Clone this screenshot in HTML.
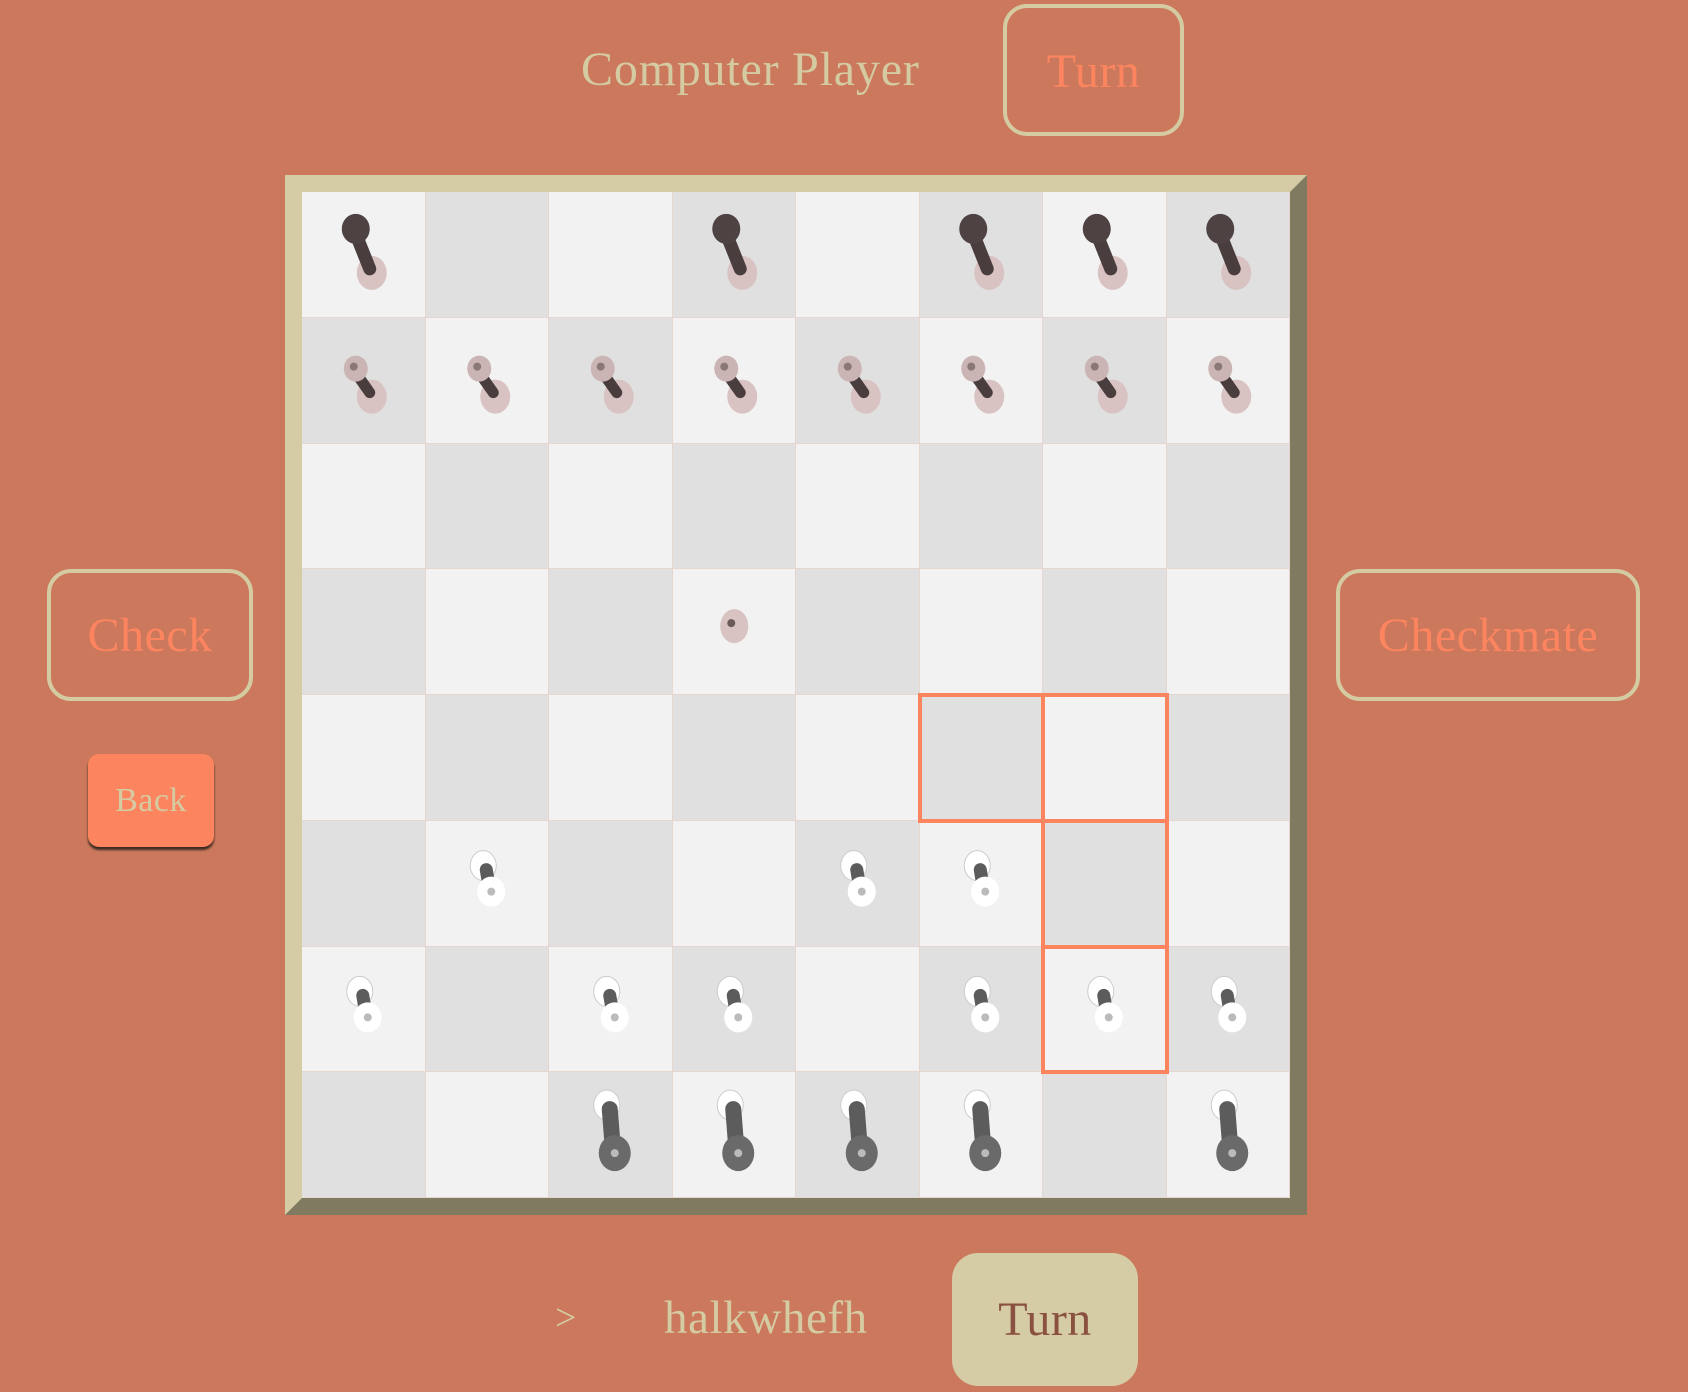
<!DOCTYPE html>
<html><head><meta charset="utf-8"><style>
*{margin:0;padding:0;box-sizing:border-box}
body{width:1688px;height:1392px;background:#cb785c;position:relative;overflow:hidden;font-family:"Liberation Serif",serif}
.t{position:absolute;white-space:nowrap}
.btn{position:absolute;display:flex;align-items:center;justify-content:center;font-size:48px;letter-spacing:0.5px}
.ob{border:4px solid #d5cba2;border-radius:24px;color:#fc8560}
#board{position:absolute;left:285px;top:175px;width:1022px;height:1040px;border:17px solid;border-color:#d5cca5 #807a60 #807a60 #d5cca5}
.c{position:absolute;width:123.5px;height:125.75px;border-right:1px solid #e6d6d0;border-bottom:1px solid #e6d6d0}
.hl{position:absolute;border:4px solid #fc8560}
svg{position:absolute;left:0;top:0}
</style></head><body>
<div class="t" style="left:581px;top:40px;font-size:48px;letter-spacing:0.8px;color:#d5cba2;line-height:60px">Computer Player</div>
<div class="btn ob" style="left:1003px;top:4px;width:181px;height:132px;padding-top:2px">Turn</div>
<div class="btn ob" style="left:47px;top:569px;width:206px;height:132px">Check</div>
<div class="btn ob" style="left:1336px;top:569px;width:304px;height:132px">Checkmate</div>
<div class="btn" style="left:88px;top:754px;width:126px;height:93px;background:#fc8560;border-radius:11px;box-shadow:0 3px 2px #3a2a22;color:#d5cba2;font-size:34px">Back</div>
<div class="t" style="left:555px;top:1296px;font-size:38px;color:#d5cba2;line-height:44px">&gt;</div>
<div class="t" style="left:664px;top:1290px;font-size:47px;letter-spacing:0.6px;color:#d5cba2;line-height:56px">halkwhefh</div>
<div class="btn" style="left:952px;top:1253px;width:186px;height:133px;background:#d5cca5;border-radius:26px;color:#8a5040;font-size:48px">Turn</div>
<div id="board"></div>
<div id="cells"></div>
<script>
var H='';var x0=302,y0=192,w=123.5,h=125.75;
for(var r=0;r<8;r++)for(var c=0;c<8;c++){
H+='<div class="c" style="left:'+(x0+c*w)+'px;top:'+(y0+r*h)+'px;background:'+((r+c)%2?'#e0e0e0':'#f2f2f2')+'"></div>';}
var dark=[[0,0],[0,3],[0,5],[0,6],[0,7]];for(var c=0;c<8;c++)dark.push([1,c]);
var wh=[[5,1],[5,4],[5,5],[6,0],[6,2],[6,3],[6,5],[6,6],[6,7],[7,2],[7,3],[7,4],[7,5],[7,7]];
var S='<svg width="1688" height="1392">';
dark.forEach(function(p){var cx=x0+p[1]*w+w/2,cy=y0+p[0]*h+h/2;var big=p[0]==0;
S+='<ellipse cx="'+(cx+8)+'" cy="'+(cy+(big?18:16))+'" rx="15" ry="17" fill="#d9c2c2"/>';
S+='<line x1="'+(cx+6)+'" y1="'+(cy+(big?14:12))+'" x2="'+(cx-6)+'" y2="'+(cy+(big?-16:-5))+'" stroke="#4a3d3e" stroke-width="'+(big?13:11)+'" stroke-linecap="round"/>';
S+='<ellipse cx="'+(cx-8)+'" cy="'+(cy+(big?-26:-12))+'" rx="'+(big?14:12)+'" ry="'+(big?15:13)+'" fill="'+(big?'#4e4243':'#cbb4b4')+'"/>';
if(!big)S+='<circle cx="'+(cx-10)+'" cy="'+(cy-14)+'" r="4" fill="#8a7878"/>';});
S+='<ellipse cx="'+(x0+3*w+w/2)+'" cy="'+(y0+3*h+h/2-6)+'" rx="14" ry="17" fill="#d9c2c2"/><circle cx="'+(x0+3*w+w/2-3)+'" cy="'+(y0+3*h+h/2-9)+'" r="4" fill="#6a5a5a"/>';
wh.forEach(function(p){var cx=x0+p[1]*w+w/2,cy=y0+p[0]*h+h/2;var big=p[0]==7;
S+='<ellipse cx="'+(cx-4)+'" cy="'+(cy+(big?-30:-18))+'" rx="13" ry="15" fill="#fff" stroke="#ccc" stroke-width="1"/>';
S+='<line x1="'+(cx-1)+'" y1="'+(cy+(big?-26:-14))+'" x2="'+(cx+2)+'" y2="'+(cy+(big?12:4))+'" stroke="#5c5c5c" stroke-width="'+(big?16:13)+'" stroke-linecap="round"/>';
S+='<ellipse cx="'+(cx+4)+'" cy="'+(cy+(big?18:8))+'" rx="'+(big?16:14)+'" ry="'+(big?18:15)+'" fill="'+(big?'#6a6a6a':'#fff')+'"/>';
S+='<circle cx="'+(cx+4)+'" cy="'+(cy+(big?18:8))+'" r="4" fill="#bbb"/>';});
S+='</svg>';
[[4,5],[4,6],[5,6],[6,6]].forEach(function(p){H+='<div class="hl" style="left:'+(x0+p[1]*w-2)+'px;top:'+(y0+p[0]*h-2)+'px;width:'+(w+4)+'px;height:'+(h+4)+'px"></div>';});
document.getElementById('cells').innerHTML=H+S;
</script>
</body></html>
